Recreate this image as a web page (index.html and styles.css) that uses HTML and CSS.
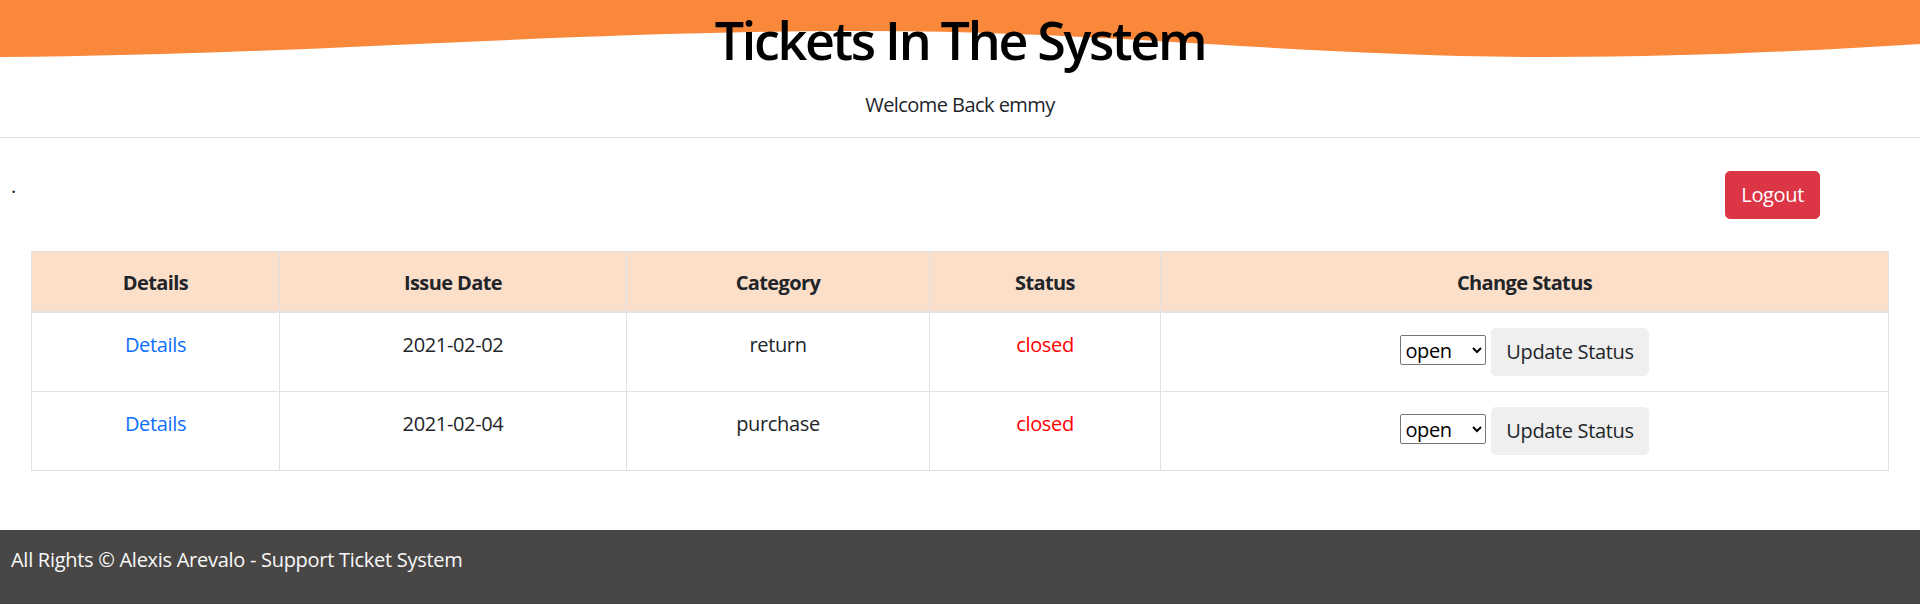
FILE: index.html
```html
<!DOCTYPE html>
<html lang="en">
<head>
<meta charset="utf-8">
<title>Tickets In The System</title>
<link rel="stylesheet" href="styles.css">
</head>
<body>
<header class="hero">
  <svg class="wave" viewBox="0 0 1920 57" preserveAspectRatio="none" aria-hidden="true">
    <path d="M0,57 C300,55 550,32 850,31 C1100,30 1300,57 1550,57 C1700,57 1820,50 1920,44 V0 H0 Z" fill="#f9883b"/>
  </svg>
  <h1 class="title">Tickets In The System</h1>
  <p class="welcome">Welcome Back emmy</p>
</header>

<div class="toolbar">
  <span class="dot">.</span>
  <button class="btn btn-logout" type="button">Logout</button>
</div>

<main class="content">
  <table class="tickets">
    <colgroup>
      <col class="c-details">
      <col class="c-date">
      <col class="c-cat">
      <col class="c-status">
      <col class="c-change">
    </colgroup>
    <thead>
      <tr>
        <th>Details</th>
        <th>Issue Date</th>
        <th>Category</th>
        <th>Status</th>
        <th>Change Status</th>
      </tr>
    </thead>
    <tbody>
      <tr>
        <td><a class="link" href="#">Details</a></td>
        <td>2021-02-02</td>
        <td>return</td>
        <td class="closed">closed</td>
        <td class="action"><select class="sel"><option>open</option><option>closed</option></select> <button class="btn btn-update" type="button">Update Status</button></td>
      </tr>
      <tr>
        <td><a class="link" href="#">Details</a></td>
        <td>2021-02-04</td>
        <td>purchase</td>
        <td class="closed">closed</td>
        <td class="action"><select class="sel"><option>open</option><option>closed</option></select> <button class="btn btn-update" type="button">Update Status</button></td>
      </tr>
    </tbody>
  </table>
</main>

<footer class="footer">All Rights &copy; Alexis Arevalo - Support Ticket System</footer>
</body>
</html>
```

FILE: styles.css
```css
* { box-sizing: border-box; }

html, body {
  margin: 0;
  padding: 0;
}

body {
  font-family: "Open Sans", "Noto Sans", sans-serif;
  font-size: 20px;
  line-height: 30px;
  letter-spacing: -0.35px;
  color: #212529;
  background: #fff;
}

.hero {
  position: relative;
  text-align: center;
  padding: 9px 0 17px;
  border-bottom: 1px solid #dee2e6;
}

.wave {
  position: absolute;
  top: 0;
  left: 0;
  width: 100%;
  height: 57px;
  display: block;
}

.title {
  position: relative;
  margin: 0;
  font-size: 52px;
  line-height: 62px;
  font-weight: 560;
  letter-spacing: -2.3px;
  color: #000;
}

.welcome {
  position: relative;
  margin: 19px 0 0;
  font-size: 20px;
  line-height: 30px;
  letter-spacing: -0.55px;
}

.toolbar {
  display: flex;
  justify-content: space-between;
  align-items: flex-start;
  padding: 30px 100px 0 11px;
}

.dot {
  margin-top: 3px;
  line-height: 30px;
}

.btn {
  font-family: inherit;
  font-size: 20px;
  line-height: 30px;
  letter-spacing: -0.35px;
  padding: 8px 15px;
  border: 1px solid transparent;
  border-radius: 5px;
  cursor: pointer;
}

.btn-logout {
  margin-top: 3px;
  background: #dc3545;
  border-color: #dc3545;
  color: #fff;
}

.content {
  padding: 32px 32px 0 31px;
}

.tickets {
  width: 100%;
  border-collapse: collapse;
  table-layout: fixed;
  border: 1px solid #dee2e6;
}

.c-details { width: 248px; }
.c-date { width: 347px; }
.c-cat { width: 303px; }
.c-status { width: 231px; }
.c-change { width: 728px; }

.tickets th,
.tickets td {
  border: 1px solid #dee2e6;
  text-align: center;
  vertical-align: top;
  padding: 17px 15px 13px;
  line-height: 30px;
}

.tickets td.action {
  padding: 15px;
}

.tickets th {
  background: #fcdfc9;
  font-weight: 700;
  letter-spacing: -0.6px;
  padding: 16px 15px 13px;
  border-bottom: 2px solid #dee2e6;
}

.link {
  color: #0d6efd;
  text-decoration: none;
}

.closed {
  color: #ff0000;
}

.sel {
  font-family: inherit;
  font-size: 20px;
  letter-spacing: -0.35px;
  height: 30px;
  width: 86px;
  vertical-align: 1px;
  border: 1px solid #767676;
  border-radius: 2px;
  background: #fff;
  color: #000;
}

.btn-update {
  background: #efefef;
  border-color: #efefef;
  color: #212529;
  padding: 8px 14px;
}

.footer {
  margin-top: 59px;
  background: #494745;
  color: #f8f9fa;
  padding: 15px 11px 29px;
  font-size: 20px;
  line-height: 30px;
  letter-spacing: -0.28px;
}
```
